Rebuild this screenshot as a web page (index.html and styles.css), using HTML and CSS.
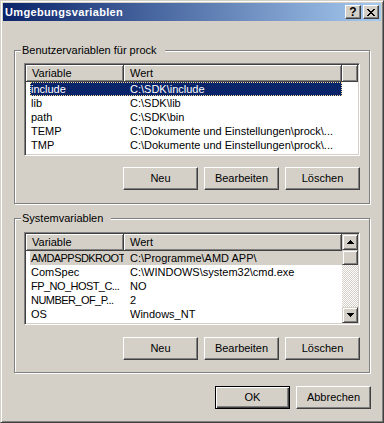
FILE: index.html
```html
<!DOCTYPE html>
<html lang="de">
<head>
<meta charset="utf-8">
<title>Umgebungsvariablen</title>
<link rel="stylesheet" href="styles.css">
</head>
<body>
<div class="window">
  <div class="titlebar">
    <span class="title">Umgebungsvariablen</span>
    <div class="cbtns">
      <span class="cbtn help">?</span>
      <span class="cbtn close">
        <svg width="8" height="7" viewBox="0 0 8 7"><path d="M0 0h2v1H0zM6 0h2v1H6zM1 1h2v1H1zM5 1h2v1H5zM2 2h4v1H2zM3 3h2v1H3zM2 4h4v1H2zM1 5h2v1H1zM5 5h2v1H5zM0 6h2v1H0zM6 6h2v1H6z" fill="#000"/></svg>
      </span>
    </div>
  </div>
  <div class="client">
    <fieldset class="group group-user">
      <legend>Benutzervariablen für prock</legend>
      <div class="listview">
        <div class="lv-body">
          <div class="lv-header">
            <div class="hcell c1">Variable</div>
            <div class="hcell c2">Wert</div>
            <div class="hcell filler"></div>
          </div>
          <div class="row selected focused"><span class="v">include</span><span class="w">C:\SDK\include</span></div>
          <div class="row"><span class="v">lib</span><span class="w">C:\SDK\lib</span></div>
          <div class="row"><span class="v">path</span><span class="w">C:\SDK\bin</span></div>
          <div class="row"><span class="v">TEMP</span><span class="w">C:\Dokumente und Einstellungen\prock\...</span></div>
          <div class="row"><span class="v">TMP</span><span class="w">C:\Dokumente und Einstellungen\prock\...</span></div>
        </div>
      </div>
      <div class="btn-row">
        <button class="btn">Neu</button>
        <button class="btn">Bearbeiten</button>
        <button class="btn">Löschen</button>
      </div>
    </fieldset>

    <fieldset class="group group-sys">
      <legend>Systemvariablen</legend>
      <div class="listview">
        <div class="lv-body">
          <div class="lv-header">
            <div class="hcell c1">Variable</div>
            <div class="hcell c2">Wert</div>
          </div>
          <div class="row selected"><span class="v tight">AMDAPPSDKROOT</span><span class="w">C:\Programme\AMD APP\</span></div>
          <div class="row"><span class="v">ComSpec</span><span class="w">C:\WINDOWS\system32\cmd.exe</span></div>
          <div class="row"><span class="v tight">FP_NO_HOST_C...</span><span class="w">NO</span></div>
          <div class="row"><span class="v tight">NUMBER_OF_P...</span><span class="w">2</span></div>
          <div class="row"><span class="v">OS</span><span class="w">Windows_NT</span></div>
          <div class="row"><span class="v">Path</span><span class="w">C:\Programme\AMD APP\bin\x86;C:\WINDOWS\...</span></div>
        </div>
        <div class="scrollbar">
          <span class="sb-btn"><svg width="7" height="4" viewBox="0 0 7 4"><path d="M3 0h1v1h1v1h1v1h1v1H0V3h1V2h1V1h1z" fill="#000"/></svg></span>
          <span class="sb-thumb"></span>
          <span class="sb-track"></span>
          <span class="sb-btn"><svg width="7" height="4" viewBox="0 0 7 4"><path d="M0 0h7v1H6v1H5v1H4v1H3V3H2V2H1V1H0z" fill="#000"/></svg></span>
        </div>
      </div>
      <div class="btn-row">
        <button class="btn">Neu</button>
        <button class="btn">Bearbeiten</button>
        <button class="btn">Löschen</button>
      </div>
    </fieldset>

    <div class="dlg-buttons">
      <button class="btn default">OK</button>
      <button class="btn">Abbrechen</button>
    </div>
  </div>
</div>
</body>
</html>
```

FILE: styles.css
```css
* {
  box-sizing: border-box;
}

html, body {
  margin: 0;
  padding: 0;
  background: #D4D0C8;
}

.window {
  width: 384px;
  height: 423px;
  background: #D4D0C8;
  border: 1px solid;
  border-color: #D4D0C8 #404040 #404040 #D4D0C8;
  box-shadow: inset 1px 1px #fff, inset -1px -1px #808080;
  padding: 2px;
  display: flex;
  flex-direction: column;
  font: 11px/13px "Liberation Sans", Arial, sans-serif;
  color: #000;
}

.titlebar {
  height: 18px;
  flex: none;
  background: linear-gradient(to right, #0A246A, #A6CAF0);
  display: flex;
  align-items: center;
  padding: 0 2px;
}

.title {
  flex: 1;
  color: #fff;
  font-weight: bold;
  font-size: 11px;
  line-height: 13px;
  letter-spacing: 0.35px;
}

.cbtns {
  display: flex;
  gap: 2px;
}

.cbtn {
  width: 16px;
  height: 14px;
  background: #D4D0C8;
  border: 1px solid;
  border-color: #fff #404040 #404040 #fff;
  box-shadow: inset -1px -1px #808080;
  display: flex;
  align-items: center;
  justify-content: center;
}

.cbtn svg {
  display: block;
}

.help {
  font-weight: bold;
  font-size: 12px;
  line-height: 12px;
  padding-bottom: 1px;
}

.client {
  flex: 1;
  padding: 23px 11px 0 11px;
  display: flex;
  flex-direction: column;
}

.group {
  margin: 0;
  min-width: 0;
  border: 1px solid #808080;
  box-shadow: inset 1px 1px #fff, 1px 1px #fff;
  padding: 6px 9px 13px 9px;
}

.group-sys {
  margin-top: 8px;
  padding: 7px 9px 12px 9px;
}

.group legend {
  padding: 0 8px 0 1px;
  margin-left: -3px;
  line-height: 13px;
  background: #D4D0C8;
}

.listview {
  height: 93px;
  background: #fff;
  border: 1px solid;
  border-color: #808080 #fff #fff #808080;
  box-shadow: inset 1px 1px #404040, inset -1px -1px #D4D0C8;
  padding: 1px;
  display: flex;
  overflow: hidden;
}

.lv-body {
  flex: 1;
  min-width: 0;
  overflow: hidden;
}

.lv-header {
  display: flex;
  height: 17px;
}

.hcell {
  height: 17px;
  background: #D4D0C8;
  border-right: 1px solid #404040;
  border-bottom: 1px solid #404040;
  box-shadow: inset 1px 1px #fff, inset -1px -1px #808080;
  padding: 2px 0 0 6px;
  white-space: nowrap;
  line-height: 13px;
}

.hcell.c1 {
  width: 98px;
}

.hcell.c2 {
  width: 218px;
}

.hcell.filler {
  flex: 1;
  padding: 0;
}

.row {
  display: grid;
  grid-template-columns: 94px 218px;
  width: 312px;
  margin-left: 4px;
  height: 14px;
  line-height: 14px;
  white-space: nowrap;
}

.row .v {
  padding-left: 1px;
  overflow: hidden;
}

.row .v.tight {
  letter-spacing: -0.55px;
}

.row .w {
  padding-left: 6px;
  overflow: hidden;
}

.row.selected {
  background: #D4D0C8;
}

.row.selected.focused {
  background: #0A246A;
  color: #fff;
  outline: 1px dotted #F5DB95;
  outline-offset: -1px;
}

.scrollbar {
  width: 16px;
  flex: none;
  display: flex;
  flex-direction: column;
}

.sb-btn,
.sb-thumb {
  height: 16px;
  flex: none;
  background: #D4D0C8;
  border: 1px solid;
  border-color: #D4D0C8 #404040 #404040 #D4D0C8;
  box-shadow: inset 1px 1px #fff, inset -1px -1px #808080;
  display: flex;
  align-items: center;
  justify-content: center;
}

.sb-thumb {
  height: 15px;
}

.sb-btn svg {
  display: block;
}

.sb-track {
  flex: 1;
  background: repeating-conic-gradient(#fff 0 25%, #D4D0C8 0 50%) 0 0 / 2px 2px;
}

.btn-row {
  display: flex;
  justify-content: flex-end;
  gap: 6px;
  margin-top: 11px;
}

.group-sys .btn-row {
  margin-top: 12px;
}

.btn {
  width: 75px;
  height: 23px;
  margin: 0;
  padding: 0;
  background: #D4D0C8;
  border: 1px solid;
  border-color: #fff #404040 #404040 #fff;
  box-shadow: inset -1px -1px #808080;
  font: 11px/13px "Liberation Sans", Arial, sans-serif;
  color: #000;
  text-align: center;
}

.btn.default {
  border-color: #000;
  box-shadow: inset 1px 1px #fff, inset -1px -1px #404040, inset -2px -2px #808080;
}

.dlg-buttons {
  display: flex;
  justify-content: flex-end;
  gap: 6px;
  margin-top: 13px;
  margin-right: -1px;
}
```
